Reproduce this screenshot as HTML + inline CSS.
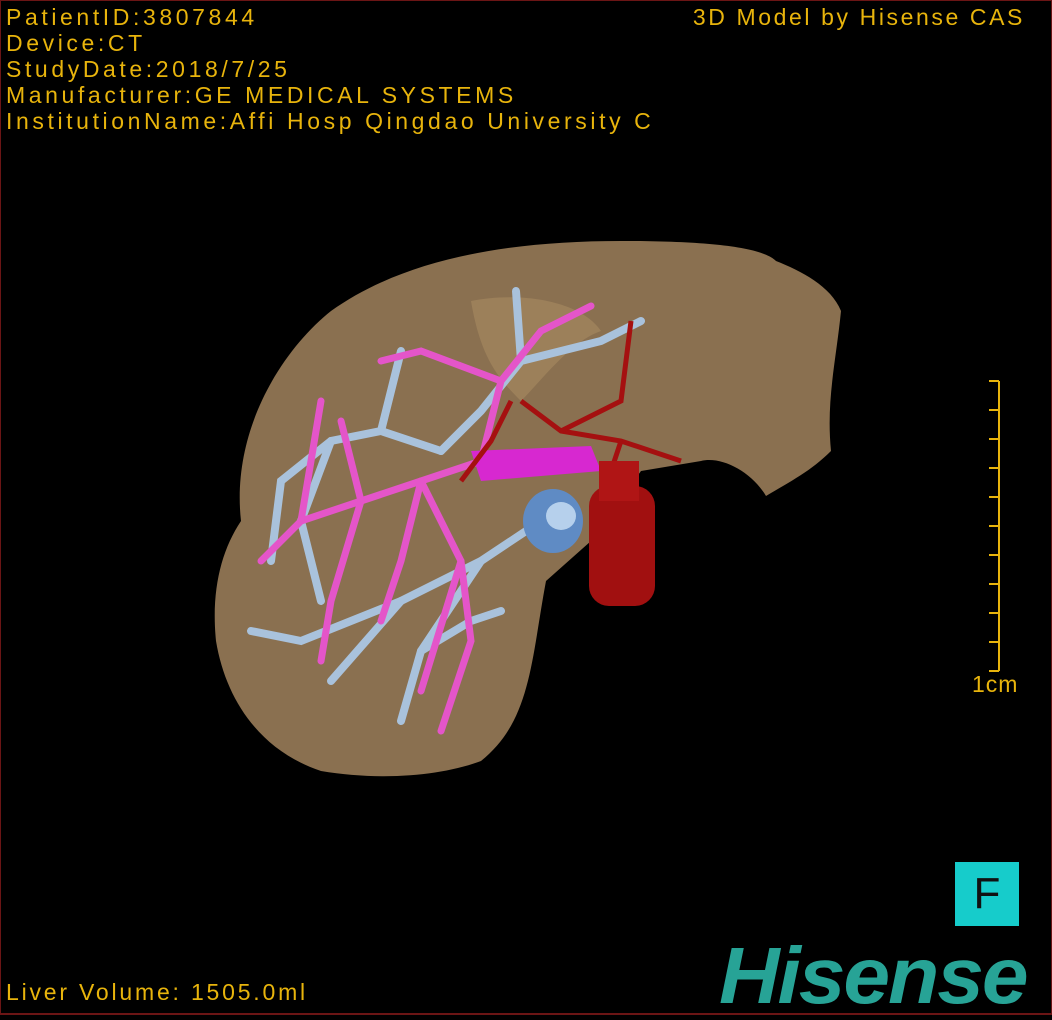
<!DOCTYPE html>
<html><head><meta charset="utf-8"><style>
html,body{margin:0;padding:0;background:#000}
#c{position:relative;width:1050px;height:1012px;border:1px solid #6b1515;border-bottom:2px solid #6b1515;overflow:hidden;background:#000;font-family:"Liberation Mono","DejaVu Sans Mono",monospace}
.t{position:absolute;color:#e8b40c;font-size:23px;line-height:26px;white-space:pre;font-family:"Liberation Sans Narrow","Liberation Sans",sans-serif;letter-spacing:3.6px}
</style></head><body><div id="c">
<div class="t" style="left:5px;top:3px">PatientID:3807844<br>Device:CT<br>StudyDate:2018/7/25<br>Manufacturer:GE MEDICAL SYSTEMS<br>InstitutionName:Affi Hosp Qingdao University C</div>
<div class="t" style="right:26px;top:3px;letter-spacing:2.6px">3D Model by Hisense CAS</div>
<div class="t" style="left:5px;top:978px;letter-spacing:2.8px">Liver Volume: 1505.0ml</div>
<svg width="1050" height="1012" style="position:absolute;left:0;top:0">
<path d="M240 520 C230 430 280 350 330 310 C400 260 500 240 620 240 C700 240 760 245 775 260 C800 270 830 285 840 310 C835 360 825 400 830 450 C810 470 790 480 765 495 C750 470 720 455 700 460 L640 470 L590 540 L545 580 C530 660 530 720 480 760 C440 775 380 780 320 770 C260 750 225 700 215 640 C210 590 220 550 240 520 Z" fill="#8a7050"/>
<path d="M470 300 C520 290 580 300 600 330 C570 340 540 380 520 400 C500 380 480 360 470 300Z" fill="#a88a60" opacity=".6"/>
<g stroke="#a9c2dc" stroke-width="8" fill="none" stroke-linecap="round">
<path d="M540 520 L480 560 L400 600 L300 640 L250 630"/><path d="M480 560 L420 650 L400 720"/><path d="M400 600 L330 680"/>
<path d="M440 450 L380 430 L330 440 L280 480 L270 560"/><path d="M380 430 L400 350"/><path d="M440 450 L480 410 L520 360 L600 340 L640 320"/>
<path d="M330 440 L300 520 L320 600"/><path d="M520 360 L515 290"/><path d="M420 650 L470 620 L500 610"/>
</g>
<g stroke="#e455c9" stroke-width="7" fill="none" stroke-linecap="round">
<path d="M480 460 L420 480 L360 500 L300 520 L260 560"/><path d="M420 480 L460 560 L470 640 L440 730"/><path d="M360 500 L340 420"/>
<path d="M360 500 L330 600 L320 660"/><path d="M420 480 L400 560 L380 620"/><path d="M480 460 L500 380 L540 330 L590 305"/>
<path d="M500 380 L420 350 L380 360"/><path d="M460 560 L420 690"/><path d="M300 520 L320 400"/>
</g>
<path d="M470 450 L590 445 L600 470 L480 480 Z" fill="#d728d0"/>
<ellipse cx="552" cy="520" rx="30" ry="32" fill="#5f8bc4"/>
<ellipse cx="560" cy="515" rx="15" ry="14" fill="#b6d0ec"/>
<g stroke="#a51010" stroke-width="5" fill="none">
<path d="M520 400 L560 430 L620 440 L680 460"/><path d="M510 400 L490 440 L460 480"/><path d="M560 430 L620 400 L630 320"/><path d="M620 440 L610 470"/>
</g>
<rect x="588" y="485" width="66" height="120" rx="20" fill="#a11010"/>
<rect x="598" y="460" width="40" height="40" fill="#b01515"/>
<g stroke="#e8b40c" stroke-width="2"><line x1="998" y1="380" x2="998" y2="670"/>
<line x1="988" y1="380" x2="998" y2="380"/><line x1="988" y1="409" x2="998" y2="409"/><line x1="988" y1="438" x2="998" y2="438"/><line x1="988" y1="467" x2="998" y2="467"/><line x1="988" y1="496" x2="998" y2="496"/><line x1="988" y1="525" x2="998" y2="525"/><line x1="988" y1="554" x2="998" y2="554"/><line x1="988" y1="583" x2="998" y2="583"/><line x1="988" y1="612" x2="998" y2="612"/><line x1="988" y1="641" x2="998" y2="641"/><line x1="988" y1="670" x2="998" y2="670"/></g>
</svg>
<div class="t" style="left:971px;top:670px;letter-spacing:1px">1cm</div>
<div style="position:absolute;left:954px;top:861px;width:64px;height:64px;background:#16cccb;color:#111;font:44px/64px 'Liberation Sans',sans-serif;text-align:center">F</div>
<div style="position:absolute;left:718px;top:935px;color:#27a396;font:italic bold 80px/80px 'Liberation Sans',sans-serif;letter-spacing:-2px;transform:scaleX(1.05);transform-origin:left">Hisense</div>
</div></body></html>
